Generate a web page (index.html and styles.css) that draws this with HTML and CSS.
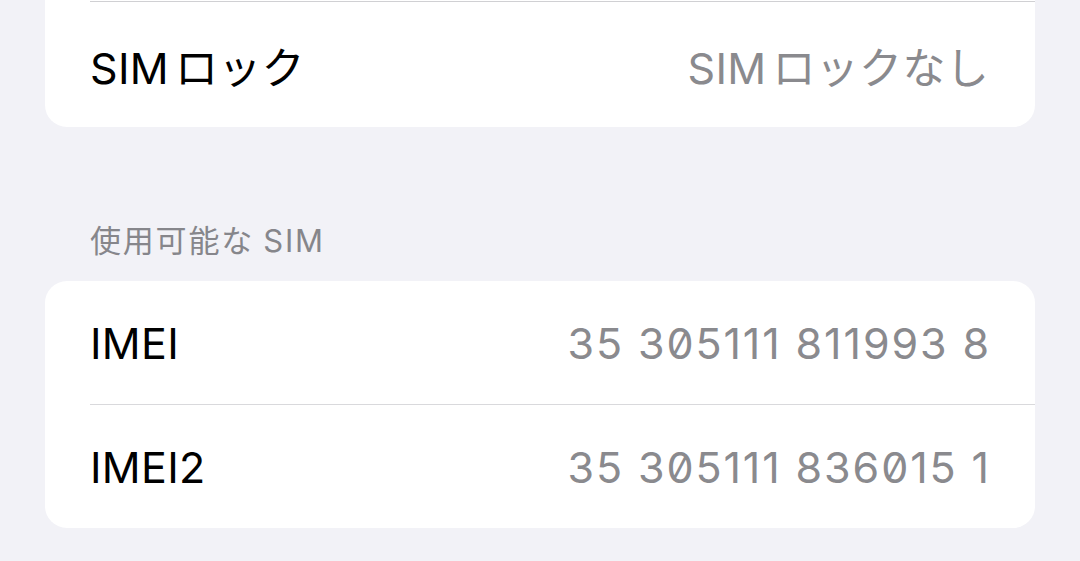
FILE: index.html
```html
<html>
<head>
  <meta charset="UTF-8">
  <title>情報</title>
  <meta name="viewport" content="width=device-width, initial-scale=1">
  <link rel="stylesheet" href="styles.css">
</head>
<body>
  <div class="page">
    <div class="group group-open">
      <div class="row">
        <div class="row-inner row-first">
          <span class="label"><span class="lat">SIM</span>ロック</span>
          <span class="value"><span class="lat">SIM</span>ロックなし</span>
        </div>
      </div>
    </div>

    <div class="section-title">使用可能な<span class="lat-before">SIM</span></div>

    <div class="group">
      <div class="row">
        <div class="row-inner">
          <span class="label">IMEI</span>
          <span class="value num">35 305111 811993 8</span>
        </div>
      </div>
      <div class="row">
        <div class="row-inner row-last">
          <span class="label">IMEI2</span>
          <span class="value num">35 305111 836015 1</span>
        </div>
      </div>
    </div>
  </div>
</body>
</html>
```

FILE: styles.css
```css
html, body {
  margin: 0;
  height: 100%;
  overflow: hidden;
  background: #f2f2f7;
}
body {
  font-family: Inter, "Noto Sans CJK JP", sans-serif;
  -webkit-font-smoothing: antialiased;
}
.page {
  padding: 0 45px;
}

/* inset grouped list */
.group {
  background: #fff;
  border-radius: 22px;
  overflow: hidden;
}
.group-open {
  border-top-left-radius: 0;
  border-top-right-radius: 0;
  padding-top: 1px;
}
.row {
  padding-left: 45px;
}
.row-inner {
  display: flex;
  align-items: center;
  justify-content: space-between;
  height: 123px;
  padding-right: 46px;
  border-bottom: 1px solid #d9d9dc;
}
.row-first {
  border-top: 1px solid #d0d0d3;
  border-bottom: 0;
  height: 125px;
}
.row-last {
  border-bottom: 0;
}
.label {
  font-size: 43px;
  color: #000;
  letter-spacing: 0.3px;
}
.value {
  font-size: 43px;
  color: #8a8a8e;
  letter-spacing: 0.3px;
}
.num {
  margin-right: -2px;
  letter-spacing: 1.9px;
  font-feature-settings: "zero";
}

/* latin word next to kana gets a little air */
.lat {
  margin-right: 0.14em;
}
.lat-before {
  margin-left: 0.3em;
}

.section-title {
  padding: 96px 0 22px 45px;
  font-size: 31px;
  line-height: 36px;
  letter-spacing: 1.8px;
  color: #86868b;
}
```
